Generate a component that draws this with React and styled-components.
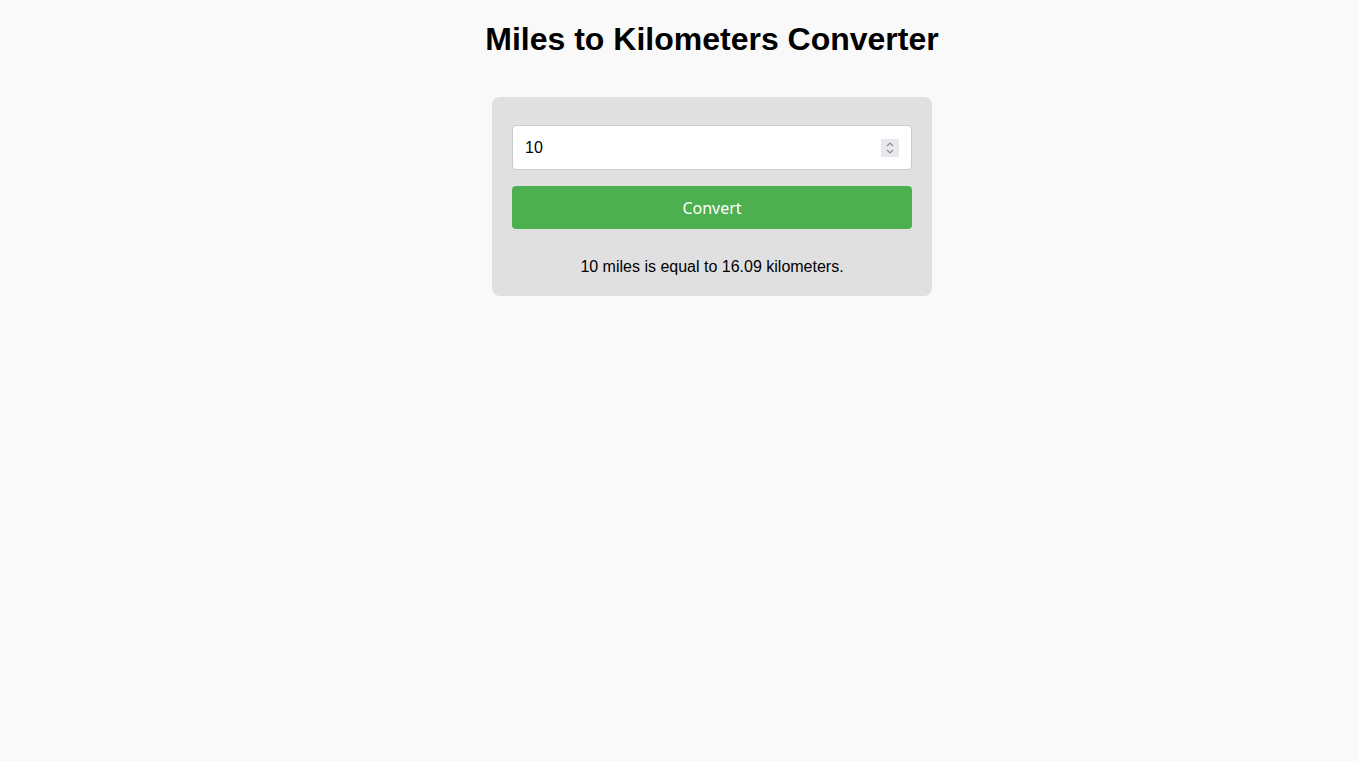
import React, { useState } from "react";
import styled, { createGlobalStyle } from "styled-components";

const GlobalStyle = createGlobalStyle`
  body {
    margin: 0;
    background: #f9f9f9;
    font-family: "Liberation Sans", Arial, sans-serif;
    color: #000;
  }
`;

const Page = styled.div`
  display: flex;
  flex-direction: column;
  align-items: center;
  padding: 21px 0 0 65px;
`;

const Title = styled.h1`
  margin: 0 0 39px;
  font-size: 32px;
  line-height: 37px;
  font-weight: bold;
`;

const Card = styled.div`
  width: 440px;
  box-sizing: border-box;
  padding: 28px 20px 20px;
  background: #e0e0e0;
  border-radius: 8px;
  display: flex;
  flex-direction: column;
`;

const InputWrap = styled.div`
  position: relative;
`;

const NumberInput = styled.input`
  box-sizing: border-box;
  width: 100%;
  height: 45px;
  padding: 0 40px 0 12px;
  border: 1px solid #ccc;
  border-radius: 4px;
  background: #fff;
  font-family: "Liberation Sans", Arial, sans-serif;
  font-size: 16px;
  color: #000;
  outline: none;
  -moz-appearance: textfield;

  &::-webkit-inner-spin-button,
  &::-webkit-outer-spin-button {
    -webkit-appearance: none;
    margin: 0;
  }
`;

const Stepper = styled.div`
  position: absolute;
  right: 13px;
  top: 14px;
  width: 18px;
  height: 18px;
  background: #e9e9ed;
  display: flex;
  flex-direction: column;
  align-items: center;
  justify-content: center;
  cursor: default;
`;

const StepBtn = styled.svg`
  display: block;
  width: 10px;
  height: 7px;
`;

const ConvertButton = styled.button`
  margin-top: 16px;
  height: 43px;
  border: none;
  border-radius: 4px;
  background: #4caf50;
  color: #fff;
  font-family: "Noto Sans", "Open Sans", sans-serif;
  font-size: 16px;
  cursor: pointer;
`;

const Result = styled.p`
  margin: 28px 0 0;
  text-align: center;
  font-size: 16px;
  line-height: 19px;
`;

export default function App() {
  const [miles, setMiles] = useState("10");
  const [result, setResult] = useState(10);

  const km = (result * 1.609344).toFixed(2);
  const step = (d) => setMiles(String((Number(miles) || 0) + d));

  return (
    <>
      <GlobalStyle />
      <Page>
        <Title>Miles to Kilometers Converter</Title>
        <Card>
          <InputWrap>
            <NumberInput
              type="number"
              value={miles}
              onChange={(e) => setMiles(e.target.value)}
            />
            <Stepper>
              <StepBtn viewBox="0 0 10 7" onClick={() => step(1)}>
                <path d="M2 5 L5 2 L8 5" fill="none" stroke="#8a8a8f" strokeWidth="1.2" />
              </StepBtn>
              <StepBtn viewBox="0 0 10 7" onClick={() => step(-1)}>
                <path d="M2 2 L5 5 L8 2" fill="none" stroke="#8a8a8f" strokeWidth="1.2" />
              </StepBtn>
            </Stepper>
          </InputWrap>
          <ConvertButton onClick={() => setResult(Number(miles) || 0)}>
            Convert
          </ConvertButton>
          <Result>
            {result} miles is equal to {km} kilometers.
          </Result>
        </Card>
      </Page>
    </>
  );
}
